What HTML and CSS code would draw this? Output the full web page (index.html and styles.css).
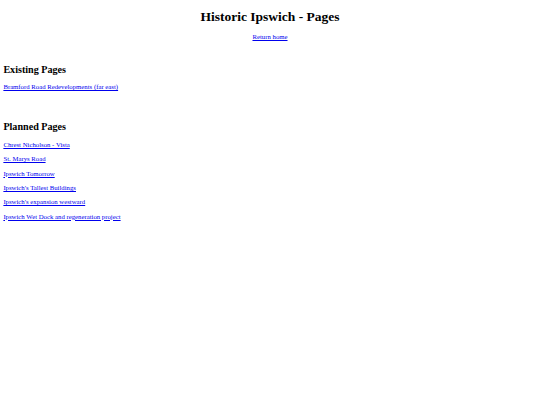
FILE: index.html
```html
<!DOCTYPE html>
<html>
<head>
<meta charset="utf-8">
<title>Historic Ipswich - Pages</title>
<link rel="stylesheet" href="styles.css">
</head>
<body class="page">
<h1 class="title">Historic Ipswich - Pages</h1>
<p class="home"><a class="link" href="#">Return home</a></p>
<section class="group">
<h2 class="heading">Existing Pages</h2>
<p class="item"><a class="link" href="#">Bramford Road Redevelopments (far east)</a></p>
</section>
<section class="group group-planned">
<h2 class="heading">Planned Pages</h2>
<p class="item"><a class="link" href="#">Chrest Nicholson - Vista</a></p>
<p class="item"><a class="link" href="#">St. Marys Road</a></p>
<p class="item"><a class="link" href="#">Ipswich Tomorrow</a></p>
<p class="item"><a class="link" href="#">Ipswich's Tallest Buildings</a></p>
<p class="item"><a class="link" href="#">Ipswich's expansion westward</a></p>
<p class="item"><a class="link" href="#">Ipswich Wet Dock and regeneration project</a></p>
</section>
</body>
</html>
```

FILE: styles.css
```css
html, body {
  background: #ffffff;
}
.page {
  margin: 3.375px;
  font-family: "Liberation Serif", "Times New Roman", serif;
  font-size: 6.75px;
  line-height: 7.594px;
  color: #000000;
}
.title {
  font-size: 13.5px;
  line-height: 15.61px;
  font-weight: bold;
  text-align: center;
  margin: 6px 0 8.2px;
}
.home {
  text-align: center;
  margin: 6.75px 0;
}
.link {
  color: #0000ee;
  text-decoration: underline;
}
.group {
  margin-top: 22.75px;
}
.group-planned {
  margin-top: 30.34px;
}
.heading {
  font-size: 10.125px;
  line-height: 11.39px;
  font-weight: bold;
  margin: 8.4px 0;
}
.item {
  margin: 6.75px 0;
}
```
